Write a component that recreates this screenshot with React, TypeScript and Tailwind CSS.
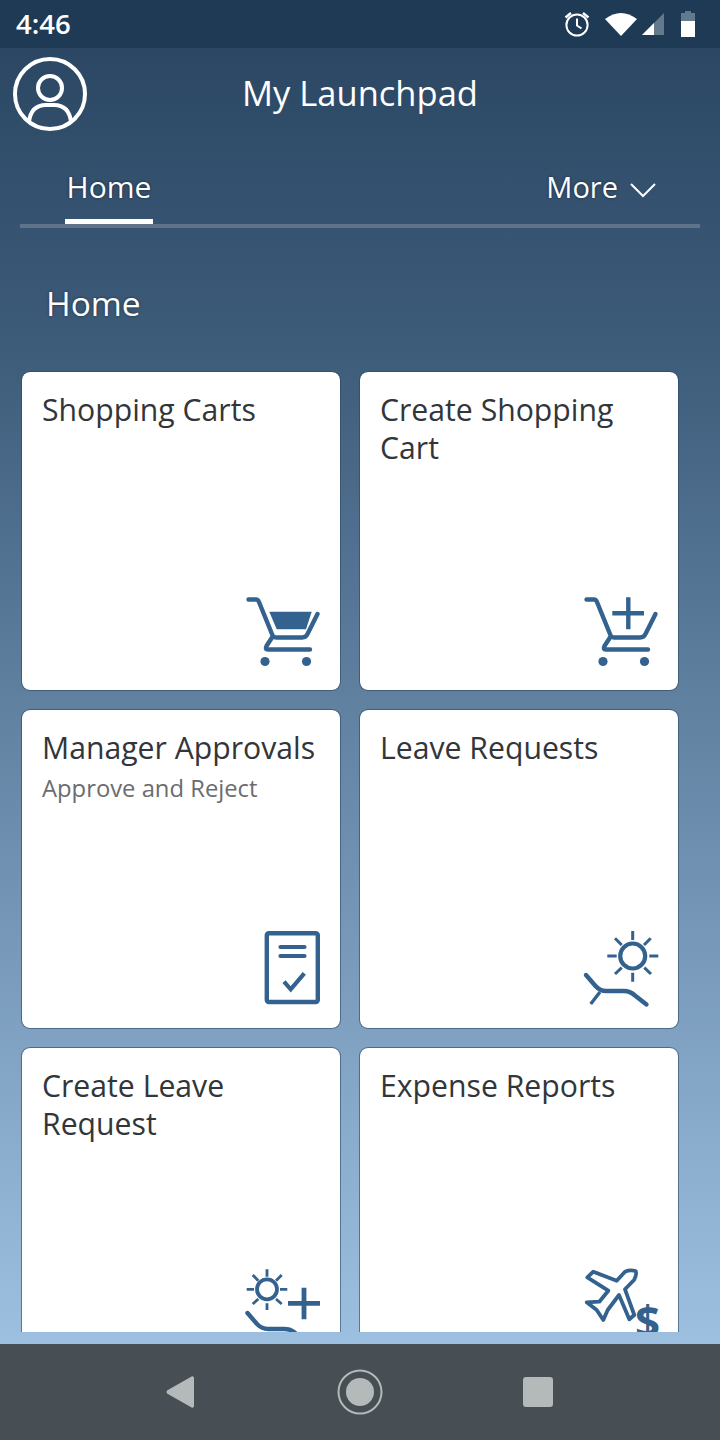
const FONT = 'font-["Open_Sans","Noto_Sans",sans-serif]'

function CartBase() {
  return (
    <>
      <path d="M6.5 9.5H14Q16 9.5 17 12L30 44Q31 47.5 34 47.5H60Q64 47.5 65.5 44L75.5 24" fill="none" stroke="currentColor" strokeWidth="4.4" strokeLinecap="round" strokeLinejoin="round" />
      <path d="M30 47.5L24.5 56Q22.5 59.5 26 59.5H68" fill="none" stroke="currentColor" strokeWidth="4.4" strokeLinecap="round" strokeLinejoin="round" />
      <circle cx="23" cy="71.5" r="4.6" fill="currentColor" />
      <circle cx="64.5" cy="71.5" r="4.6" fill="currentColor" />
    </>
  )
}

function CartIcon() {
  return (
    <svg viewBox="0 0 80 80" className="h-20 w-20 text-[#34628e]">
      <CartBase />
      <path d="M27.3 21.7H69.7L64 39.3H34.7Z" fill="currentColor" />
    </svg>
  )
}

function CartPlusIcon() {
  return (
    <svg viewBox="0 0 80 80" className="h-20 w-20 text-[#34628e]">
      <CartBase />
      <path d="M32.3 23.3H64M48.3 7.3V39.3" fill="none" stroke="currentColor" strokeWidth="4.4" />
    </svg>
  )
}

function ApprovalIcon() {
  return (
    <svg viewBox="0 0 80 80" className="h-20 w-20 text-[#34628e]" fill="none" stroke="currentColor">
      <rect x="24.8" y="5.3" width="51" height="68.7" rx="2" strokeWidth="4.4" />
      <path d="M38.5 19H62.5M38.5 28H62.5" strokeWidth="4.2" strokeLinecap="round" />
      <path d="M42 53.7L48.7 61.3L62.3 45.3" strokeWidth="4.2" />
    </svg>
  )
}

function BeachIcon() {
  return (
    <svg viewBox="0 0 80 80" className="h-20 w-20 text-[#34628e]" fill="none" stroke="currentColor">
      <circle cx="52.7" cy="28" r="12.5" strokeWidth="4.2" />
      <path d="M52.7 3V12M52.7 44.7V53.7M27.3 28H36.7M69.3 28H78.3M35 10.3L41.7 17M70.7 10.3L64 17M35 46L41.7 39.7M71 46L64.3 39.7" strokeWidth="3" />
      <path d="M6 47L15.5 58Q20 63 26 63H44Q50 63 55 67.5L66.5 76.5" strokeWidth="4.4" strokeLinecap="round" />
      <path d="M20 64L10.7 76" strokeWidth="3.4" />
    </svg>
  )
}

function BeachPlusIcon() {
  return (
    <svg viewBox="0 0 80 80" className="h-20 w-20 text-[#34628e]" fill="none" stroke="currentColor">
      <circle cx="25" cy="23.3" r="10" strokeWidth="3.8" />
      <path d="M25 3.3V10.7M25 37.3V44M4.7 23.3H12M38 23.3H45.3M10.7 9L16.3 14.7M39.7 9L34 14.7M10.7 38L16.3 33M39.7 38L34 33" strokeWidth="2.8" />
      <path d="M62 21.7V53.3M46 37.3H78" strokeWidth="4.8" />
      <path d="M5.5 47L15 58Q20 63 26 63H42Q48 63 52 66L64 76" strokeWidth="4.4" strokeLinecap="round" />
    </svg>
  )
}

function PlaneIcon() {
  return (
    <svg viewBox="0 0 80 80" className="h-20 w-20 text-[#34628e]">
      <path d="M55.7 5Q50 3.5 45 5.7L36.7 14.7L13.3 5.7L7.3 11.3L28.3 24.7L19.3 35.7L6.7 36.3L16.7 44L23.3 54L27.7 44L39 29L49.3 53.3L54.3 49L45 23.3L54 14Q57 9 55.7 5Z" fill="none" stroke="currentColor" strokeWidth="3.8" strokeLinejoin="round" />
      <text x="67.5" y="72" textAnchor="middle" fontSize="44" fontWeight="700" fill="currentColor" fontFamily="'Open Sans', sans-serif">$</text>
    </svg>
  )
}

type Tile = { title: string; sub?: string; icon: React.ReactNode }

const tiles: Tile[] = [
  { title: 'Shopping Carts', icon: <CartIcon /> },
  { title: 'Create Shopping Cart', icon: <CartPlusIcon /> },
  { title: 'Manager Approvals', sub: 'Approve and Reject', icon: <ApprovalIcon /> },
  { title: 'Leave Requests', icon: <BeachIcon /> },
  { title: 'Create Leave Request', icon: <BeachPlusIcon /> },
  { title: 'Expense Reports', icon: <PlaneIcon /> },
]

export default function App() {
  return (
    <div className={`flex h-[1440px] w-[720px] flex-col overflow-hidden ${FONT}`}>
      {/* status bar */}
      <div className="flex h-12 shrink-0 items-center bg-[#1f3a54] pl-4 pr-[25px] text-white">
        <span className="text-[27.5px] font-semibold leading-none">4:46</span>
        <div className="ml-auto flex items-center">
          <svg viewBox="0 0 28 28" className="h-7 w-7" fill="none" stroke="currentColor">
            <circle cx="14" cy="15" r="10.6" strokeWidth="2" />
            <path d="M14 8.5V15.5L18.5 18.5" strokeWidth="2" />
            <path d="M2.5 7.5L8 3M25.5 7.5L20 3" strokeWidth="2.4" />
          </svg>
          <svg viewBox="0 0 32 24" className="ml-[14px] h-6 w-8" fill="currentColor">
            <path d="M0 7Q16 -5 32 7L16 24Z" />
          </svg>
          <svg viewBox="0 0 22 22" className="ml-[5px] h-[22px] w-[22px]">
            <path d="M22 0V22H0Z" fill="#65798c" />
            <path d="M12 10V22H0Z" fill="#fff" />
          </svg>
          <svg viewBox="0 0 14 26" className="ml-[17px] h-[26px] w-[14px]">
            <path d="M4 0H10V2H14V10H0V2H4Z" fill="#65798c" />
            <rect y="10" width="14" height="16" fill="#fff" />
          </svg>
        </div>
      </div>

      {/* shell */}
      <div className="flex min-h-0 flex-1 flex-col bg-[linear-gradient(#2b4764_0%,#3e5d7b_24%,#6080a0_50%,#9dc0e1_100%)]">
        <div className="relative flex h-[90px] shrink-0 items-center justify-center">
          <svg viewBox="0 0 80 80" className="absolute left-[10px] top-[6px] h-20 w-20" fill="none" stroke="#fff" strokeWidth="4">
            <circle cx="40" cy="40" r="35" />
            <circle cx="40" cy="34" r="12" />
            <path d="M19 68Q21 51 36 51H44Q59 51 61 68" />
          </svg>
          <span className="text-[34.5px] leading-none text-white">My Launchpad</span>
        </div>

        <div className="mx-5 flex h-[90px] shrink-0 items-end justify-between border-b-4 border-[#5f7488] text-white [text-shadow:0_0_3px_rgba(0,0,0,0.5)]">
          <div className="ml-[45px] flex h-full w-[88px] items-end justify-center border-b-[5px] border-white pb-3 text-[30px] leading-[40px]">Home</div>
          <div className="flex h-full items-end pb-[17px] text-[29px] leading-[40px]">
            More
            <svg viewBox="0 0 26 16" className="mb-[9px] ml-3 mr-[44px] h-4 w-[26px]" fill="none" stroke="#fff" strokeWidth="2">
              <path d="M1 2L13 14L25 2" />
            </svg>
          </div>
        </div>

        <h1 className="ml-[46px] mt-[53px] text-[33.5px] font-normal leading-[44px] text-white [text-shadow:0_0_3px_rgba(0,0,0,0.5)]">Home</h1>

        {/* tiles */}
        <div className="ml-[21px] mt-[46px] h-[961px] overflow-hidden">
          <div className="grid w-[658px] grid-cols-[320px_320px] gap-[18px]">
            {tiles.map(t => (
              <div key={t.title} className="flex h-[320px] flex-col rounded-[9px] border border-[#2b4764]/60 bg-white bg-clip-padding pb-5 pl-5 pr-[18px] pt-[19px]">
                <div className="text-[30.2px] leading-[38px] text-[#32363a]">{t.title}</div>
                {t.sub && <div className="mt-[5px] text-[23.8px] leading-[32px] text-[#6a6d70]">{t.sub}</div>}
                <div className="mt-auto self-end">{t.icon}</div>
              </div>
            ))}
          </div>
        </div>
      </div>

      {/* android nav */}
      <div className="flex h-24 shrink-0 items-center justify-center bg-[#474e54]">
        <svg viewBox="0 0 28 32" className="h-8 w-7" fill="#b4b9ba">
          <path d="M26 0.2Q28 0 28 2V30Q28 32 26 31.8L1 17.5Q0 16 1 14.5Z" />
        </svg>
        <svg viewBox="0 0 46 46" className="ml-[143px] h-[46px] w-[46px]">
          <circle cx="23" cy="23" r="21.5" fill="none" stroke="#b4b9ba" strokeWidth="2" />
          <circle cx="23" cy="23" r="14" fill="#b4b9ba" />
        </svg>
        <div className="ml-[140px] mr-[2px] h-[30px] w-[30px] rounded-[3px] bg-[#b4b9ba]" />
      </div>
    </div>
  )
}
